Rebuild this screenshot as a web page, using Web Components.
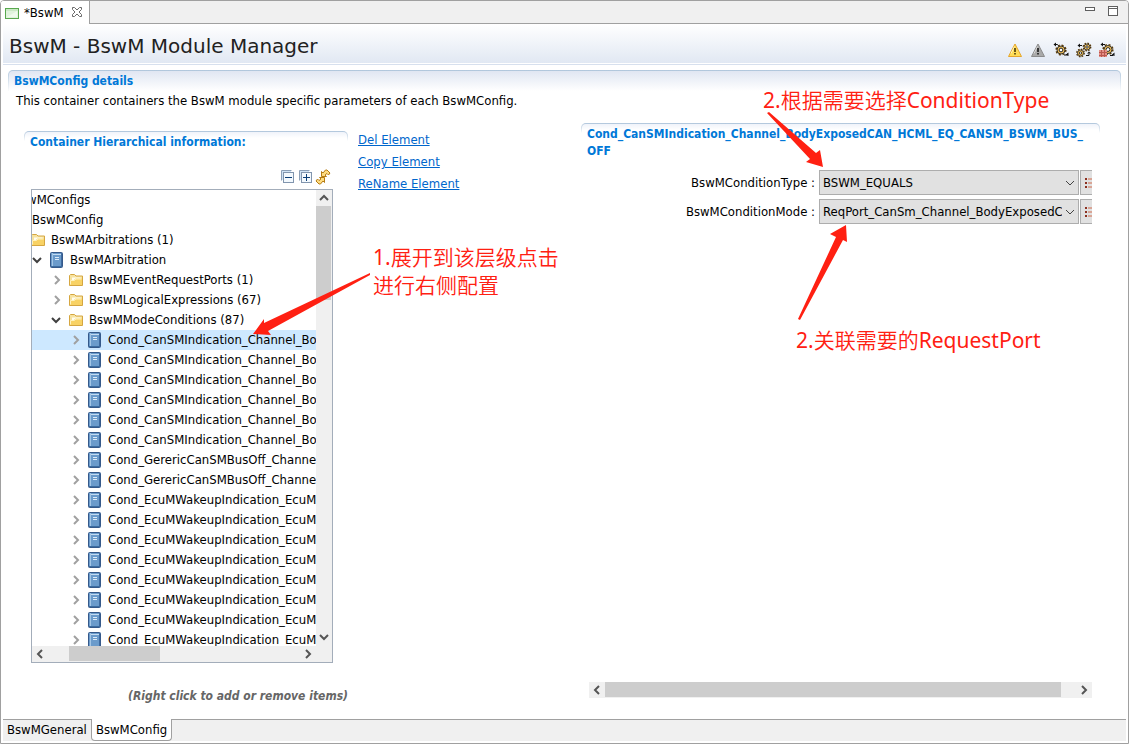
<!DOCTYPE html>
<html lang="zh">
<head>
<meta charset="utf-8">
<title>BswM</title>
<style>
  html, body { height: 100%; }
  body {
    margin: 0;
    font: 13px/20px "DejaVu Sans Condensed", "Noto Sans CJK SC", sans-serif;
    color: #000;
    background: #fff;
  }
</style>
</head>
<body>
<bsw-editor></bsw-editor>

<script>
const ICONS = {
  file: `<rect x="1.5" y="3.5" width="13" height="10" fill="#dff3dc" stroke="#58a84e"/><path d="M2 5h12" stroke="#b5e0ae"/><path d="M3 12l10-6v6z" fill="#eefaec"/>`,
  close: `<path d="M3.5 2.5h2L8 5l2.5-2.500h2v2L10 7l2.500 2.500v2h-2L8 9l-2.500 2.500h-2v-2L6 7 3.500 4.500z" fill="#fff" stroke="#6a6a6a"/>`,
  min: `<rect x="3.5" y="4.5" width="9" height="3" fill="#fff" stroke="#5f5f5f"/>`,
  max: `<rect x="3.5" y="3.5" width="9" height="9" fill="#fff" stroke="#5f5f5f"/><path d="M3 5.5h10" stroke="#5f5f5f"/>`,
  warn: `<path d="M8 2L14.500 14.500h-13z" fill="#ffdc55" stroke="#e5a52b" stroke-linejoin="round"/><path d="M7.500 4.500L4 11.500" stroke="#fff3b5"/><path d="M8 6v4M8 11v1.500" stroke="#3a2c00" stroke-width="1.500"/>`,
  warnGrey: `<path d="M8 2L14.500 14.500h-13z" fill="#a9a9a9" stroke="#8b8b8b" stroke-linejoin="round"/><path d="M7.500 4.500L4 11.500" stroke="#d5d5d5"/><path d="M8 6v4M8 11v1.500" stroke="#111" stroke-width="1.500"/>`,
  gear: `<circle cx="8" cy="8" r="4.800" fill="none" stroke="#5a3c0c" stroke-width="1.600" stroke-dasharray="2 1.770"/><circle cx="8" cy="8" r="4" fill="#f5c35a" stroke="#222" stroke-width=".9"/><circle cx="8" cy="8" r="1.900" fill="#fff" stroke="#222"/><path d="M2 2.500h2.500l1 1M11 13h2.500M13.500 13l1-1.500" fill="none" stroke="#111"/><path d="M.5 2.500l2.500-2v4zM15.500 10.500v3.500l-3-1z" fill="#111"/>`,
  gears: `<g stroke="#222"><circle cx="11" cy="5" r="3.700" fill="none" stroke="#5a3c0c" stroke-width="1.400" stroke-dasharray="1.600 1.300"/><circle cx="11" cy="5" r="3" fill="#f5c35a" stroke-width=".8"/><circle cx="11" cy="5" r="1.200" fill="#fff" stroke-width=".9"/><circle cx="4.500" cy="11" r="3.700" fill="none" stroke="#5a3c0c" stroke-width="1.400" stroke-dasharray="1.600 1.300"/><circle cx="4.500" cy="11" r="3" fill="#f5c35a" stroke-width=".8"/><circle cx="4.500" cy="11" r="1.200" fill="#fff" stroke-width=".9"/></g><path d="M3 3.500h3M10 13.500h3v-2" fill="none" stroke="#111"/><path d="M1.500 3.500l2.500-2v4zM11 11.500l2-2 2 2z" fill="#111"/>`,
  gearGrid: `<circle cx="9" cy="7.500" r="4.800" fill="none" stroke="#5a3c0c" stroke-width="1.600" stroke-dasharray="2 1.770"/><circle cx="9" cy="7.500" r="4" fill="#f5c35a" stroke="#222" stroke-width=".9"/><circle cx="9" cy="7.500" r="1.900" fill="#fff" stroke="#222"/><path d="M3 2.500h3M11 13.500h3" fill="none" stroke="#111"/><path d="M1.500 2.500l2.500-2v4zM15.500 10.500v3.500l-3-1z" fill="#111"/><path d="M0 8h8v7H0z" fill="#e58f86"/><path d="M2.500 8v7M5.500 8v7M0 10.500h8M0 13.500h8" stroke="#b9574f"/>`,
  collapse: `<path d="M2.500 11.500v-10h10" fill="none" stroke="#8ca0b8"/><path d="M3 2h9v2H5v7H3z" fill="#cfe3f5"/><rect x="4.5" y="3.5" width="10" height="10" fill="#f3f9fe" stroke="#8195ae"/><path d="M6 8.500h7" stroke="#0b3f78"/>`,
  expand: `<path d="M2.500 11.500v-10h10" fill="none" stroke="#8ca0b8"/><path d="M3 2h9v2H5v7H3z" fill="#cfe3f5"/><rect x="4.5" y="3.5" width="10" height="10" fill="#f3f9fe" stroke="#8195ae"/><path d="M6 8.500h7M9.500 5v7" stroke="#0b3f78"/>`,
  refresh: `<g fill="#ffdc80" stroke="#b57b13" stroke-linejoin="round"><path d="M6.500 7.500v-5l1.500 1.500 2.500-3h1.500l3 3-1.500 2-1.500-1.500-2 1.500 1.500 1.500z"/><path d="M9.500 8.500v5l-1.500-1.500-2.500 3H4l-3-3 1.500-2 1.500 1.500 2-1.500-1.500-1.500z"/></g>`,
  folder: `<path d="M.5 13.500v-10l1-1h4L7 4h6.500v9.500z" fill="#f7e3a0" stroke="#d5a640"/><path d="M3 5.500h8.500v3H3z" fill="#fffdf2"/><path d="M1 13V8h4l1.500-1.500H13V13z" fill="#f8d265"/><path d="M1.500 12.500v-4h4L7 7h5.500" fill="none" stroke="#fff2bd"/>`,
  book: `<rect x=".5" y=".5" width="12" height="15" rx="1" fill="#6b9bcb" stroke="#35598a"/><path d="M11.500 1v14" stroke="#3f6ba0"/><path d="M2.500 1v14" stroke="#a3c6e6"/><path d="M3 2.500h8" stroke="#c4dcf2"/><path d="M5 5.500h4M5 7.500h4" stroke="#dcebf8"/><path d="M1 14.500h11" stroke="#3c6ca0"/>`,
  list: `<path d="M1 3h2v2H1zM1 7h2v2H1zM1 11h2v2H1z" fill="#8c3020"/><path d="M4 4h10M4 8h10M4 12h10" stroke="#d06a4c"/>`,
  right: `<path d="M5 4l4 4-4 4" fill="none" stroke="#a0a0a0" stroke-width="2"/>`,
  down: `<path d="M2 6l4 4 4-4" fill="none" stroke="#404040" stroke-width="2"/>`
};

class BswIcon extends HTMLElement {
  constructor() {
    super();
    this.attachShadow({ mode: 'open' });
  }

  connectedCallback() {
    this.shadowRoot.innerHTML = `
      <style>
        :host { display: block; flex: none; width: 16px; height: 16px; }
        svg { display: block; }
      </style>
      <svg width="16" height="16" viewBox="0 0 16 16" aria-hidden="true">${ICONS[this.getAttribute('name')] || ''}</svg>
    `;
  }
}

// Titled form section: rounded top edge whose colour fades out downwards
class BswSection extends HTMLElement {
  constructor() {
    super();
    this.attachShadow({ mode: 'open' });
  }

  connectedCallback() {
    // a long identifier may only wrap before its last part
    const heading = this.getAttribute('heading').replace(/_([A-Z]+)$/, '_<wbr>$1');
    this.shadowRoot.innerHTML = `
      <style>
        :host { display: flex; flex-direction: column; min-width: 0; min-height: 0; --tint: #f0f3fa; --fade: 6px; --edge: 10px; }
        :host([main]) { --tint: #e0e6f2; --fade: 20px; --edge: 22px; }
        h2 {
          margin: 0;
          padding: 2px 5px 1px;
          border: 1px solid transparent;
          border-bottom: 0;
          border-radius: 5px 5px 0 0;
          font-size: 12px;
          line-height: 17px;
          font-weight: bold;
          color: #0078d7;
          background:
            linear-gradient(var(--tint), #fff var(--fade)) padding-box,
            linear-gradient(#b0c6dc, #fff var(--edge)) border-box;
        }
      </style>
      <h2>${heading}</h2>
      <slot></slot>
    `;
  }
}

class BswScrollbar extends HTMLElement {
  constructor() {
    super();
    this.attachShadow({ mode: 'open' });
  }

  connectedCallback() {
    const [before, thumb, after] = this.getAttribute('parts').split(' ');
    const vertical = this.hasAttribute('vertical');
    const arrows = vertical ? ['M4 10l4-4 4 4', 'M4 5l4 4 4-4'] : ['M10 4L6 8l4 4', 'M6 4l4 4-4 4'];
    const arrow = (d) => `<svg width="16" height="16"><path d="${d}" fill="none" stroke="#555" stroke-width="2"/></svg>`;
    this.shadowRoot.innerHTML = `
      <style>
        :host { display: flex; height: 16px; background: #f0f0f0; }
        :host([vertical]) { flex-direction: column; width: 16px; height: auto; }
        button { flex: none; width: 16px; height: 16px; padding: 0; border: 0; background: none; }
        svg { display: block; }
        .thumb { background: #cdcdcd; margin-bottom: 1px; }
        :host([vertical]) .thumb { margin: 0 1px 0 0; }
      </style>
      <button aria-label="Scroll back">${arrow(arrows[0])}</button>
      <div style="flex: ${before} 1 0"></div>
      <div class="thumb" style="flex: ${thumb} 1 0"></div>
      <div style="flex: ${after} 1 0"></div>
      <button aria-label="Scroll forward">${arrow(arrows[1])}</button>
    `;
  }
}

class BswTreeItem extends HTMLElement {
  constructor() {
    super();
    this.attachShadow({ mode: 'open' });
  }

  connectedCallback() {
    const arrow = this.getAttribute('arrow');
    this.shadowRoot.innerHTML = `
      <style>
        :host { display: block; white-space: nowrap; }
        :host([selected]) { background: #cde8ff; }
        .row { display: flex; align-items: center; height: 20px; padding-left: calc(19px * var(--level)); }
        .arrow { width: 16px; margin-right: 3px; }
        bsw-icon { margin-right: 4px; }
        .arrow bsw-icon { margin: 0; }
      </style>
      <div class="row" style="--level: ${this.getAttribute('level')}">
        <span class="arrow">${arrow ? `<bsw-icon name="${arrow}"></bsw-icon>` : ''}</span>
        <bsw-icon name="${this.getAttribute('icon')}"></bsw-icon>
        <slot></slot>
      </div>
    `;
  }
}

const TREE = [
  [0, 'down', 'folder', 'BswMConfigs'],
  [1, 'down', 'book', 'BswMConfig'],
  [2, 'down', 'folder', 'BswMArbitrations (1)'],
  [3, 'down', 'book', 'BswMArbitration'],
  [4, 'right', 'folder', 'BswMEventRequestPorts (1)'],
  [4, 'right', 'folder', 'BswMLogicalExpressions (67)'],
  [4, 'down', 'folder', 'BswMModeConditions (87)'],
  ...Array(6).fill([5, 'right', 'book', 'Cond_CanSMIndication_Channel_Bo']),
  ...Array(2).fill([5, 'right', 'book', 'Cond_GerericCanSMBusOff_Channe']),
  ...Array(8).fill([5, 'right', 'book', 'Cond_EcuMWakeupIndication_EcuM'])
];
const SELECTED_ROW = 7;

class BswTree extends HTMLElement {
  constructor() {
    super();
    this.attachShadow({ mode: 'open' });
  }

  connectedCallback() {
    const items = TREE.map(([level, arrow, icon, text], i) =>
      `<bsw-tree-item level="${level}" arrow="${arrow}" icon="${icon}"${i === SELECTED_ROW ? ' selected' : ''}>${text}</bsw-tree-item>`);
    this.shadowRoot.innerHTML = `
      <style>
        :host {
          display: grid;
          grid-template: minmax(0, 1fr) 16px / minmax(0, 1fr) 16px;
          border: 1px solid #a3adba;
          background: #f0f0f0;
        }
        .view { overflow: hidden; background: #fff; }
        .items { margin-left: -58px; }
      </style>
      <div class="view"><div class="items">${items.join('')}</div></div>
      <bsw-scrollbar vertical parts="0 94 329"></bsw-scrollbar>
      <bsw-scrollbar parts="21 91 140"></bsw-scrollbar>
    `;
  }
}

class BswField extends HTMLElement {
  constructor() {
    super();
    this.attachShadow({ mode: 'open' });
  }

  connectedCallback() {
    this.shadowRoot.innerHTML = `
      <style>
        :host { display: flex; align-items: center; gap: 1px; }
        label { width: 226px; margin-right: 3px; text-align: right; white-space: nowrap; }
        .box { position: relative; flex: 1; min-width: 0; }
        select {
          appearance: none;
          display: block;
          width: 100%;
          height: 25px;
          padding: 0 16px 0 3px;
          border: 1px solid #adadad;
          border-radius: 0;
          background: #e1e1e1;
          color: #000;
          font: inherit;
        }
        .box svg { position: absolute; right: 4px; top: 8px; pointer-events: none; }
        button {
          flex: none;
          width: 25px;
          height: 25px;
          margin-right: -13px;
          padding: 0 3px;
          border: 1px solid #adadad;
          background: #e1e1e1;
        }
      </style>
      <label for="value">${this.getAttribute('label')} :</label>
      <div class="box">
        <select id="value"><option>${this.getAttribute('value')}</option></select>
        <svg width="10" height="10"><path d="M1 3l4 4 4-4" fill="none" stroke="#444"/></svg>
      </div>
      <button aria-label="Choose"><bsw-icon name="list"></bsw-icon></button>
    `;
  }
}

class BswLink extends HTMLElement {
  constructor() {
    super();
    this.attachShadow({ mode: 'open' });
    this.shadowRoot.innerHTML = `
      <style>
        :host { display: block; line-height: 22px; }
        a { color: #0066cc; }
      </style>
      <a href="#"><slot></slot></a>
    `;
  }
}

// Red notes and arrows that lie over the editor
class BswNotes extends HTMLElement {
  constructor() {
    super();
    this.attachShadow({ mode: 'open' });
    this.shadowRoot.innerHTML = `
      <style>
        :host {
          position: absolute;
          inset: -1px;
          pointer-events: none;
          color: #ff2012;
          font: 350 21px/28px "Noto Sans", "Noto Sans CJK SC", sans-serif;
        }
        svg { position: absolute; left: 0; top: 0; }
        p { position: absolute; margin: 0; white-space: nowrap; }
        span { font-weight: 400; }
      </style>
      <svg width="1129" height="744" fill="#ff2012">
        <path d="M370 273L264 323L264 319L253 334L271 335L268 331L370 275z"/>
        <path d="M767 113L810 159L806 162L823 167L820 150L816 153L769 112z"/>
        <path d="M798 319L836 237L830 234L846 225L847 242L843 240L800 320z"/>
      </svg>
      <p style="left: 373px; top: 243px"><span>1.</span>展开到该层级点击<br>进行右侧配置</p>
      <p style="left: 763px; top: 86px"><span>2.</span>根据需要选择<span>ConditionType</span></p>
      <p style="left: 796px; top: 326px"><span>2.</span>关联需要的<span>RequestPort</span></p>
    `;
  }
}

class BswEditor extends HTMLElement {
  constructor() {
    super();
    this.attachShadow({ mode: 'open' });
    this.shadowRoot.innerHTML = `
      <style>
        :host {
          position: relative;
          display: flex;
          flex-direction: column;
          box-sizing: border-box;
          height: 100%;
          min-height: 480px;
          border: 1px solid #a0a0a0;
          border-radius: 4px 4px 0 0;
          overflow: hidden;
        }
        .tabs { display: flex; height: 22px; background: #f0f0f0; border-bottom: 1px solid #a0a0a0; }
        .tab {
          display: flex; align-items: center; gap: 4px;
          padding: 0 4px 0 3px; height: 23px; box-sizing: border-box;
          border-right: 1px solid #a0a0a0; background: #fff;
        }
        .tab bsw-icon:last-child { margin-left: 1px; }
        .window { display: flex; gap: 7px; margin-left: auto; padding: 2px 7px 0 0; }
        header {
          display: flex; align-items: center;
          height: 39px; margin: 0 2px; padding: 0 11px 0 6px;
          background: linear-gradient(#fff, #e1e8f3);
        }
        h1 { margin: 0; flex: 1; font: 20px/28px "DejaVu Sans", sans-serif; color: #222; padding-top: 4px; }
        .tools { display: flex; gap: 7px; padding-top: 12px; }
        hr { margin: 1px 2px 5px; border: 0; border-top: 1px solid #d7e0ee; }
        .main { flex: 1; margin: 0 7px; }
        .about { margin: 0 8px; }
        .cols {
          flex: 1;
          min-height: 0;
          display: grid;
          grid-template-columns: 324fr 213fr 519fr;
          gap: 10px;
          margin: 12px 21px 0 16px;
        }
        .left { margin-top: 8px; }
        .treebar { display: flex; justify-content: flex-end; gap: 2px; margin: 17px 17px 4px 0; }
        bsw-tree { flex: 1; min-height: 0; margin: 0 15px 0 7px; }
        .hint { margin: 23px 0 13px; text-align: right; font-size: 12px; font-weight: bold; font-style: italic; color: #666; }
        .links { padding-top: 6px; }
        .fields { flex: 1; display: flex; flex-direction: column; gap: 4px; overflow: hidden; margin: 9px 8px 0; }
        .right bsw-scrollbar { margin: 0 8px 21px; }
        nav { display: flex; height: 21px; margin: 0 2px 2px; border-top: 1px solid #a0a0a0; background: #f0f0f0; }
        nav a { padding: 0 4px; color: #000; text-decoration: none; }
        nav a.on { background: #fff; border: 1px solid #a0a0a0; border-top: 0; border-radius: 0 0 4px 4px; margin-top: -1px; padding: 1px 4px 0; }
      </style>
      <div class="tabs">
        <div class="tab"><bsw-icon name="file"></bsw-icon>*BswM<bsw-icon name="close"></bsw-icon></div>
        <div class="window"><bsw-icon name="min"></bsw-icon><bsw-icon name="max"></bsw-icon></div>
      </div>
      <header>
        <h1>BswM - BswM Module Manager</h1>
        <div class="tools">
          <bsw-icon name="warn"></bsw-icon>
          <bsw-icon name="warnGrey"></bsw-icon>
          <bsw-icon name="gear"></bsw-icon>
          <bsw-icon name="gears"></bsw-icon>
          <bsw-icon name="gearGrid"></bsw-icon>
        </div>
      </header>
      <hr>
      <bsw-section class="main" main heading="BswMConfig details">
        <div class="about">This container containers the BswM module specific parameters of each BswMConfig.</div>
        <div class="cols">
          <bsw-section class="left" heading="Container Hierarchical information:">
            <div class="treebar">
              <bsw-icon name="collapse"></bsw-icon>
              <bsw-icon name="expand"></bsw-icon>
              <bsw-icon name="refresh"></bsw-icon>
            </div>
            <bsw-tree></bsw-tree>
            <div class="hint">(Right click to add or remove items)</div>
          </bsw-section>
          <div class="links">
            <bsw-link>Del Element</bsw-link>
            <bsw-link>Copy Element</bsw-link>
            <bsw-link>ReName Element</bsw-link>
          </div>
          <bsw-section class="right" heading="Cond_CanSMIndication_Channel_BodyExposedCAN_HCML_EQ_CANSM_BSWM_BUS_OFF">
            <div class="fields">
              <bsw-field label="BswMConditionType" value="BSWM_EQUALS"></bsw-field>
              <bsw-field label="BswMConditionMode" value="ReqPort_CanSm_Channel_BodyExposedC"></bsw-field>
            </div>
            <bsw-scrollbar parts="0 456 15"></bsw-scrollbar>
          </bsw-section>
        </div>
      </bsw-section>
      <nav>
        <a href="#">BswMGeneral</a>
        <a href="#" class="on">BswMConfig</a>
      </nav>
      <bsw-notes></bsw-notes>
    `;
  }
}

customElements.define('bsw-icon', BswIcon);
customElements.define('bsw-section', BswSection);
customElements.define('bsw-scrollbar', BswScrollbar);
customElements.define('bsw-tree-item', BswTreeItem);
customElements.define('bsw-tree', BswTree);
customElements.define('bsw-field', BswField);
customElements.define('bsw-link', BswLink);
customElements.define('bsw-notes', BswNotes);
customElements.define('bsw-editor', BswEditor);
</script>
</body>
</html>
